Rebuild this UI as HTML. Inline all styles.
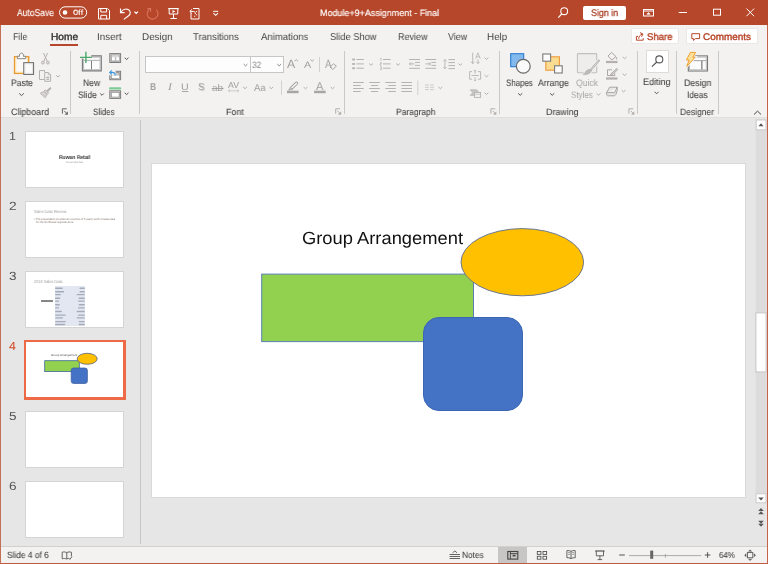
<!DOCTYPE html>
<html><head><meta charset="utf-8"><title>PowerPoint</title>
<style>
html,body{margin:0;padding:0;background:#e6e6e6;}
body{width:768px;height:564px;overflow:hidden;position:relative;font-family:"Liberation Sans",sans-serif;}
#w{position:absolute;left:0;top:0;width:768px;height:564px;overflow:hidden;background:#e6e6e6;}
.a{position:absolute;}
.t{position:absolute;white-space:nowrap;line-height:1;will-change:transform;transform-origin:0 0;text-rendering:geometricPrecision;}
svg{position:absolute;overflow:visible;}
</style></head><body><div id="w">
<div class="a" style="left:0;top:0;width:768px;height:25px;background:#b7472a"></div>
<div class="a" style="left:0;top:25px;width:768px;height:92px;background:#f3f2f1"></div>
<div class="a" style="left:0;top:117px;width:768px;height:1px;background:#e1dfdd"></div>
<div class="a" style="left:0;top:546px;width:768px;height:18px;background:#f3f2f1;border-top:1px solid #d2d0ce;box-sizing:border-box"></div>
<div class="a" style="left:140px;top:120px;width:1px;height:424px;background:#c8c6c4"></div>
<div class="a" style="left:152px;top:164px;width:593px;height:333px;background:#fff;box-shadow:0 0 0 1px #d9d9d9"></div>
<svg style="left:0;top:0" width="768" height="564">
<rect x="261.7" y="274.1" width="211.8" height="67.5" fill="#92d050" stroke="#5a80b2" stroke-width="1"/>
<ellipse cx="522.3" cy="262.2" rx="61.3" ry="33.6" fill="#ffc000" stroke="#6b7690" stroke-width="1"/>
<rect x="423.5" y="317.5" width="99" height="93" rx="15.5" ry="15.5" fill="#4472c4" stroke="#3b66b6" stroke-width="1"/>
</svg>
<svg style="left:0;top:0" width="768" height="564">
<rect x="755.7" y="119" width="11" height="375" fill="#dcdcdc"/>
<rect x="756.2" y="120" width="9.8" height="9.8" fill="#fff" stroke="#cbcbcb" stroke-width="1"/>
<rect x="756.1" y="493.8" width="9.8" height="9" fill="#fff" stroke="#cbcbcb" stroke-width="1"/>
<rect x="755.9" y="312.9" width="10.2" height="59" fill="#fff" stroke="#c6c6c6" stroke-width="1"/>
<path d="M758.4 126.3 L761 123.3 L763.6 126.3 Z" fill="#555"/>
<path d="M758.2 497.4 L763.8 497.4 L761 500.5 Z" fill="#555"/>
<path d="M758.2 511 L761 508 L763.8 511 Z M758.2 514.2 L761 511.2 L763.8 514.2 Z" fill="#555"/>
<path d="M758.2 520.8 L763.8 520.8 L761 523.7 Z M758.2 523.8 L763.8 523.8 L761 526.7 Z" fill="#555"/>
</svg>
<div class="a" style="left:25px;top:131px;width:99px;height:57px;background:#fff;border:1px solid #d4d4d4;box-sizing:border-box"></div>
<div class="a" style="left:25px;top:201px;width:99px;height:57px;background:#fff;border:1px solid #d4d4d4;box-sizing:border-box"></div>
<div class="a" style="left:25px;top:271px;width:99px;height:57px;background:#fff;border:1px solid #d4d4d4;box-sizing:border-box"></div>
<div class="a" style="left:24px;top:340px;width:102px;height:60px;background:#fff;border:2px solid #ee6a46;border-right-width:3px;border-bottom-width:3px;box-sizing:border-box"></div>
<div class="a" style="left:25px;top:411px;width:99px;height:57px;background:#fff;border:1px solid #d4d4d4;box-sizing:border-box"></div>
<div class="a" style="left:25px;top:481px;width:99px;height:57px;background:#fff;border:1px solid #d4d4d4;box-sizing:border-box"></div>
<div class="a" style="left:0;top:25px;width:768px;height:539px;border-left:1px solid #c46f58;border-right:1px solid #c4634a;border-bottom:1px solid #c05a3f;box-sizing:border-box;pointer-events:none;z-index:50"></div>
<div class="a" style="left:50px;top:44px;width:28px;height:2px;background:#b7472a"></div>
<div class="a" style="left:583px;top:6px;width:43px;height:14px;background:#fff;border-radius:2px"></div>
<div class="a" style="left:70.0px;top:51px;width:1px;height:63px;background:#cbc9c7"></div>
<div class="a" style="left:139.0px;top:51px;width:1px;height:63px;background:#cbc9c7"></div>
<div class="a" style="left:343.5px;top:51px;width:1px;height:63px;background:#cbc9c7"></div>
<div class="a" style="left:498.7px;top:51px;width:1px;height:63px;background:#cbc9c7"></div>
<div class="a" style="left:637.0px;top:51px;width:1px;height:63px;background:#cbc9c7"></div>
<div class="a" style="left:676.0px;top:51px;width:1px;height:63px;background:#cbc9c7"></div>
<div class="a" style="left:718.0px;top:51px;width:1px;height:63px;background:#cbc9c7"></div>
<svg style="left:0;top:0" width="768" height="26" fill="none" stroke="#fff" stroke-width="1" stroke-linecap="butt" stroke-linejoin="miter">
<rect x="59.5" y="6.8" width="27.2" height="11.3" rx="5.65" stroke-width="1"/>
<circle cx="65" cy="12.5" r="2.3" fill="#fff" stroke="none"/>
<!-- save -->
<path d="M98.5 8.5 H107.5 L109.5 10.5 V19 H98.5 Z"/>
<path d="M100.8 8.5 V12 H106.6 V8.5"/>
<path d="M100.8 19 V15.3 H106.6 V19"/>
<!-- undo -->
<path d="M120.5 8.6 V12.6 H124.6" stroke-width="1.1"/>
<path d="M120.8 12.3 C122.5 9.6 125.6 8.3 128.2 9.5 C130.8 10.9 130.9 13.8 128.6 15.8 L123.8 19.4" stroke-width="1.1"/>
<path d="M134.4 11.6 L136.2 13.5 L138 11.6" stroke-width="1.2"/>
<!-- redo (disabled) -->
<g stroke="#d8735c" stroke-width="1.1">
<path d="M149.6 9.2 A5.4 5.4 0 1 0 156.2 9.7"/>
<path d="M147.4 8.5 H150.6 V11.7" />
</g>
<!-- slideshow -->
<path d="M168.2 8.6 H178.8" stroke-width="1.2"/>
<path d="M169.2 9 V14 H177.8 V9"/>
<path d="M172.5 10.1 L175.3 11.6 L172.5 13.1 Z" fill="#fff" stroke="none"/>
<path d="M173.5 14 V18.5 M170.4 18.5 H176.9"/>
<!-- touch/mouse icon -->
<path d="M193 8.5 H199 V19 H191 V13"/>
<path d="M190 11.4 H193.3 C195 11.4 195.4 12.6 195.4 14" stroke-width="1"/>
<path d="M191.9 9.4 L189.8 11.4 L191.9 13.4" stroke-width="1"/>
<path d="M196.5 11 V12 M196.5 14.3 V15.3 M194.6 15.8 V16.8" stroke-width="1.1"/>
<!-- customize -->
<path d="M213.2 11.3 H218.2" stroke-width="1"/>
<path d="M213.4 13.2 L215.7 15.3 L218 13.2" stroke-width="1.1"/>
<!-- search -->
<circle cx="564.2" cy="11.2" r="3.4" stroke-width="1.1"/>
<path d="M561.8 13.8 L558.3 17.6" stroke-width="1.2"/>
<!-- ribbon display -->
<rect x="643.5" y="9.5" width="10" height="6.5" stroke-width="1"/>
<path d="M643.5 11 H653.5" stroke-width="1"/>
<path d="M646.8 14.3 L648.5 12.6 L650.2 14.3 Z" fill="#fff" stroke="#fff" stroke-width="0.6"/>
<!-- min max close -->
<path d="M678.7 12.5 H687" stroke-width="1"/>
<rect x="713.5" y="9.2" width="7" height="6" stroke-width="1"/>
<path d="M746.5 8.6 L754.1 16.2 M754.1 8.6 L746.5 16.2" stroke-width="1"/>
</svg>
<svg style="left:0;top:0" width="768" height="118" fill="none" stroke-linecap="butt">
<rect x="14.6" y="56.7" width="14" height="16.6" fill="#faf9f8" stroke="#ec9a30" stroke-width="1.5"/>
<rect x="15.8" y="57.9" width="11.6" height="14.2" fill="none" stroke="#fbe4b4" stroke-width="1"/>
<path d="M17.3 58.7 V56.3 H19.6 C19.2 54.6 20 53.1 21.5 53.1 C23 53.1 23.8 54.6 23.4 56.3 H25.7 V58.7 Z" fill="#fcfcfc" stroke="#8a8a8a" stroke-width="1"/>
<rect x="23.8" y="62.7" width="9.7" height="11.7" fill="#fafafa" stroke="#747474" stroke-width="1.2"/>
<rect x="25" y="63.9" width="7.3" height="9.3" fill="none" stroke="#e4e4e4" stroke-width="0.8"/>
<path d="M19.2 93.4 L21.5 95.6 L23.8 93.4" stroke="#555" stroke-width="1.0" fill="none"/>
<g stroke="#b3b0ad" stroke-width="1"><path d="M43.5 53 L47.2 61.4 M47.5 53 L43.8 61.4"/><circle cx="42.9" cy="62.6" r="1.4" fill="#e6e4e2"/><circle cx="47.9" cy="62.6" r="1.4" fill="#e6e4e2"/></g>
<g stroke="#b3b0ad" stroke-width="1"><path d="M44 79.5 H39.5 V70.5 H44.5 V72"/><path d="M44.7 72.5 H48.3 L50.6 74.8 V81.3 H44.7 Z"/><path d="M46.3 77.3 H49.2 M46.3 79.2 H49.2" stroke="#a3a19f"/><path d="M48.3 72.5 V74.8 H50.6" stroke-width="0.7"/></g>
<path d="M56.1 75.3 L58.0 77.1 L59.9 75.3" stroke="#b3b0ad" stroke-width="1.0" fill="none"/>
<g stroke="#b3b0ad" stroke-width="0.9"><path d="M50.3 88.2 L47.6 91" stroke-width="2" stroke-linecap="round"/><path d="M45.4 89.8 L48.6 93 L47 94.6 L43.8 91.4 Z" fill="#d4d2d0"/><path d="M43.5 91.8 L40.2 93.2 L45.2 97.8 L46.7 94.8 Z" fill="#e2e0de"/><path d="M42 93.6 L46 96.4" stroke-width="0.6"/></g>
<path d="M91.2 56 H101.2 V70.8 H82.5 V58.2 H91.2 Z" fill="#fcfcfc" stroke="none"/>
<path d="M91.3 57.1 H100.1 V69.7 H83.6 V58.6" fill="none" stroke="#b9b9b9" stroke-width="1"/>
<path d="M91.2 55.9 H101.3 V70.9 H82.4 V58.5" fill="none" stroke="#787878" stroke-width="1.1"/>
<path d="M84 60.4 H99.8" stroke="#b4b4b4" stroke-width="1.1"/><path d="M91.5 60.9 V69.4" stroke="#808080" stroke-width="1"/>
<path d="M80 57.4 H91.9 M85.9 51.7 V62.9" stroke="#4aa968" stroke-width="1.4"/>
<path d="M100.2 93.5 L102.0 95.3 L103.8 93.5" stroke="#555" stroke-width="1.0" fill="none"/>
<rect x="109.8" y="53.6" width="10.8" height="8.9" fill="#eceae8" stroke="#7c7c7c" stroke-width="1"/><rect x="111.1" y="54.9" width="8.2" height="6.3" fill="#c4c4c4" stroke="#8e8e8e" stroke-width="0.8"/>
<rect x="111.9" y="57.2" width="2.9" height="3.2" fill="#fff"/><rect x="116.3" y="57.2" width="2.9" height="3.2" fill="#fff"/><rect x="111.7" y="55.4" width="7.6" height="1.2" fill="#e4e4e4"/>
<path d="M124.7 57.7 L126.6 59.5 L128.5 57.7" stroke="#555" stroke-width="1.0" fill="none"/>
<rect x="109.8" y="71.3" width="10.8" height="8.4" fill="#eceae8" stroke="#7c7c7c" stroke-width="1"/><rect x="111.1" y="72.6" width="8.2" height="5.8" fill="#c4c4c4" stroke="#8e8e8e" stroke-width="0.8"/>
<rect x="112" y="75.6" width="7.2" height="2.6" fill="#fff"/>
<rect x="108" y="69" width="7.6" height="6.2" fill="#f3f2f1" stroke="none"/>
<path d="M110 72.4 H112.6 C114.6 72.4 115.2 73.8 115.2 75.6" stroke="#3a96dd" stroke-width="1.1"/><path d="M111.8 70.3 L109.7 72.4 L111.8 74.5" stroke="#3a96dd" stroke-width="1.1"/>
<path d="M110 88.4 H120.2" stroke="#7dcc96" stroke-width="2.2" stroke-linecap="round"/>
<rect x="109.8" y="90.8" width="10.8" height="7.6" fill="#eceae8" stroke="#7c7c7c" stroke-width="1"/><rect x="111.1" y="92.1" width="8.2" height="5.0" fill="#c4c4c4" stroke="#8e8e8e" stroke-width="0.8"/>
<rect x="112" y="93" width="6.6" height="3.6" fill="#fff"/>
<path d="M124.7 92.8 L126.6 94.6 L128.5 92.8" stroke="#555" stroke-width="1.0" fill="none"/>
<path d="M62.4 113.7 V108.8 H66.7" stroke="#666" stroke-width="1"/><path d="M64.3 110.9 L67.1 113.9" stroke="#666" stroke-width="1"/><path d="M67.9 111.3 V114.7 H64.5 Z" fill="#666" stroke="none"/>
<path d="M335.7 113.7 V108.8 H340.0" stroke="#b3b0ad" stroke-width="1"/><path d="M337.6 110.9 L340.4 113.9" stroke="#b3b0ad" stroke-width="1"/><path d="M341.2 111.3 V114.7 H337.8 Z" fill="#b3b0ad" stroke="none"/>
<path d="M490.9 113.7 V108.8 H495.2" stroke="#b3b0ad" stroke-width="1"/><path d="M492.8 110.9 L495.6 113.9" stroke="#b3b0ad" stroke-width="1"/><path d="M496.4 111.3 V114.7 H493.0 Z" fill="#b3b0ad" stroke="none"/>
<path d="M628.9 113.7 V108.8 H633.2" stroke="#b3b0ad" stroke-width="1"/><path d="M630.8 110.9 L633.6 113.9" stroke="#b3b0ad" stroke-width="1"/><path d="M634.4 111.3 V114.7 H631.0 Z" fill="#b3b0ad" stroke="none"/>
</svg>
<div class="a" style="left:145px;top:56px;width:106px;height:17px;background:#fdfdfd;border:1px solid #c8c6c4;box-sizing:border-box"></div>
<div class="a" style="left:250px;top:56px;width:34px;height:17px;background:#fdfdfd;border:1px solid #c8c6c4;box-sizing:border-box"></div>
<svg style="left:0;top:0" width="768" height="118" fill="none" stroke-linecap="butt">
<path d="M243.6 64.1 L245.5 65.9 L247.4 64.1" stroke="#8a8886" stroke-width="1.0" fill="none"/>
<path d="M277.3 64.1 L279.2 65.9 L281.1 64.1" stroke="#8a8886" stroke-width="1.0" fill="none"/>
<path d="M181.8 91.5 H188.3" stroke="#a09e9c" stroke-width="0.9"/>
<path d="M211.8 88.5 H223.6" stroke="#a09e9c" stroke-width="0.9"/>
<path d="M228.4 90.8 H239 M230 89.4 L228.5 90.8 L230 92.2 M237.4 89.4 L238.9 90.8 L237.4 92.2" stroke="#c2c0be" stroke-width="0.8"/>
<path d="M243.1 86.9 L245.0 88.7 L246.9 86.9" stroke="#b3b0ad" stroke-width="1.0" fill="none"/>
<path d="M269.4 86.9 L271.3 88.7 L273.2 86.9" stroke="#b3b0ad" stroke-width="1.0" fill="none"/>
<path d="M294.6 61.2 L296.3 59.6 L298 61.2" stroke="#a09e9c" stroke-width="0.9"/>
<path d="M310.5 59.6 L312.2 61.2 L313.9 59.6" stroke="#a09e9c" stroke-width="0.9"/>
<path d="M319.5 57 V72" stroke="#d2d0ce" stroke-width="1"/>
<path d="M281.5 80.5 V95" stroke="#d2d0ce" stroke-width="1"/>
<path d="M333.6 63.8 L336.4 66.2 L332.8 69.4 L330 67 Z" fill="#f3f2f1" stroke="#a09e9c" stroke-width="0.9"/>
<path d="M296.5 83.3 L291.6 88" stroke="#a09e9c" stroke-width="3.4" stroke-linecap="round"/><path d="M296.5 83.3 L291.6 88" stroke="#f3f2f1" stroke-width="1.7" stroke-linecap="round"/>
<path d="M290.4 87.2 L292.4 89.2 L288.4 90.2 Z" fill="#c8c6c4" stroke="#a09e9c" stroke-width="0.6"/>
<rect x="287" y="90.7" width="11.6" height="2.5" fill="#a8a6a4"/>
<path d="M303.6 87.0 L305.5 88.8 L307.4 87.0" stroke="#b3b0ad" stroke-width="1.0" fill="none"/>
<rect x="314.1" y="90.7" width="11.6" height="2.5" fill="#a8a6a4"/>
<path d="M330.7 87.0 L332.6 88.8 L334.5 87.0" stroke="#b3b0ad" stroke-width="1.0" fill="none"/>
</svg>
<svg style="left:0;top:0" width="768" height="118" fill="none" stroke-linecap="butt">
<path d="M356.4 59.5 H363.8 M352.4 59.5 H354.8 M356.4 63.9 H363.8 M352.4 63.9 H354.8 M356.4 68.2 H363.8 M352.4 68.2 H354.8 M383.0 59.5 H390.6 M383.0 63.9 H390.6 M383.0 68.2 H390.6 M409.1 59.5 H420.0 M415.0 62.4 H420.0 M415.0 65.4 H420.0 M409.1 68.3 H420.0 M409.3 63.9 H414.3 M425.4 59.5 H436.2 M431.4 62.4 H436.2 M431.4 65.4 H436.2 M425.4 68.3 H436.2 M425.6 63.9 H430.6 M448.4 59.6 H455.0 M448.4 62.6 H455.0 M448.4 65.6 H455.0 M448.4 68.6 H455.0 M353.1 82.5 H363.8 M369.1 82.5 H379.8 M385.3 82.5 H395.8 M401.3 82.5 H412.0 M353.1 85.5 H360.7 M371.0 85.5 H378.1 M388.3 85.5 H395.8 M401.3 85.5 H412.0 M353.1 88.5 H363.8 M369.1 88.5 H379.8 M385.3 88.5 H395.8 M401.3 88.5 H412.0 M353.1 91.5 H360.7 M371.0 91.5 H378.1 M388.3 91.5 H395.8 M401.3 91.5 H412.0 " stroke="#b5b3b1" stroke-width="1"/>
<path d="M352.4 59.5 H354.8 M352.4 63.9 H354.8 M352.4 68.2 H354.8" stroke="#b5b3b1" stroke-width="2"/>
<path d="M380.3 58.4 L381 57.8 V61 M380 62.6 H381.4 V63.8 H380 V65.2 H381.5 M380 66.8 H381.4 V69.6 H380 M380.4 68.2 H381.4" stroke="#b5b3b1" stroke-width="0.7"/>
<path d="M411 62.2 L409.3 63.9 L411 65.6 M429 62.2 L430.7 63.9 L429 65.6" stroke="#b5b3b1" stroke-width="0.9"/>
<path d="M444.9 59.6 V68.8 M443.3 61.2 L444.9 59.6 L446.5 61.2 M443.3 67.2 L444.9 68.8 L446.5 67.2" stroke="#b5b3b1" stroke-width="0.9"/>
<path d="M369.2 63.5 L371.1 65.3 L373.0 63.5" stroke="#b3b0ad" stroke-width="1.0" fill="none"/>
<path d="M396.1 63.5 L398.0 65.3 L399.9 63.5" stroke="#b3b0ad" stroke-width="1.0" fill="none"/>
<path d="M458.4 63.5 L460.3 65.3 L462.2 63.5" stroke="#b3b0ad" stroke-width="1.0" fill="none"/>
<path d="M484.6 57.6 L486.5 59.4 L488.4 57.6" stroke="#b3b0ad" stroke-width="1.0" fill="none"/>
<path d="M484.6 75.1 L486.5 76.9 L488.4 75.1" stroke="#b3b0ad" stroke-width="1.0" fill="none"/>
<path d="M484.6 92.7 L486.5 94.5 L488.4 92.7" stroke="#b3b0ad" stroke-width="1.0" fill="none"/>
<path d="M438.5 86.9 L440.4 88.7 L442.3 86.9" stroke="#b3b0ad" stroke-width="1.0" fill="none"/>
<path d="M417.8 80.5 V95" stroke="#d2d0ce" stroke-width="1"/>
<path d="M425 85 H428.8 M430 85 H433.8 M425 87.3 H428.8 M430 87.3 H433.8 M425 89.6 H428.8 M430 89.6 H433.8" stroke="#c8c6c4" stroke-width="0.9"/>
<path d="M472.7 52.6 V63.6 M470.8 61.6 L472.7 63.6 L474.6 61.6 M478 59.4 V63.6 M476.4 62 L478 63.6 L479.6 62" stroke="#b5b3b1" stroke-width="0.9"/>
<path d="M475.6 58.6 L477.9 52.8 L480.2 58.6 M476.4 56.8 H479.4" stroke="#b5b3b1" stroke-width="0.8"/>
<path d="M472 71.6 H469.6 V79.2 H472 M478 71.6 H480.6 V79.2 H478 M471.5 75.5 H478.8" stroke="#b5b3b1" stroke-width="0.9"/>
<path d="M475.1 70 V73.8 M475.1 77.2 V81 M473.9 71.2 L475.1 70 L476.3 71.2 M473.9 79.8 L475.1 81 L476.3 79.8" stroke="#b5b3b1" stroke-width="0.8"/>
<path d="M470.2 89.8 H476.6 L479 92.6 L476.6 95.4 H470.2 L472.6 92.6 Z" fill="#c8c6c4" stroke="#b5b3b1" stroke-width="0.7"/>
<rect x="474.6" y="92.4" width="6" height="5" fill="#f3f2f1" stroke="#b5b3b1" stroke-width="0.9"/><path d="M474.6 94.2 H480.6" stroke="#b5b3b1" stroke-width="0.7"/>
</svg>
<div class="a" style="left:631px;top:28px;width:48px;height:16px;background:#fff;border:1px solid #eae8e6;border-radius:2px;box-sizing:border-box"></div>
<div class="a" style="left:686px;top:28px;width:72px;height:16px;background:#fff;border:1px solid #eae8e6;border-radius:2px;box-sizing:border-box"></div>
<div class="a" style="left:645.5px;top:50px;width:23px;height:22.5px;background:#fff;border:1px solid #dddbd9;box-sizing:border-box"></div>
<svg style="left:0;top:0" width="768" height="118" fill="none" stroke-linecap="butt">
<path d="M638 36.4 H636.4 V40.2 H643.2 V38.2" stroke="#b7472a" stroke-width="1"/><path d="M638.7 38.8 C638.8 36.4 640 34.8 642.2 34.2" stroke="#b7472a" stroke-width="1"/><path d="M640 32.6 L642.9 34 L641.5 36.8" stroke="#b7472a" stroke-width="1"/>
<path d="M691.8 33.7 H699.6 V38.6 H695.4 L693.4 40.4 V38.6 H691.8 Z" stroke="#b7472a" stroke-width="1"/>
<rect x="510.7" y="53.7" width="13" height="13" fill="#83b9ec" stroke="#2b7cd3" stroke-width="1.1"/>
<circle cx="523.3" cy="66.2" r="6.9" fill="#fafafa" stroke="#666" stroke-width="1.2"/>
<path d="M518.1 93.3 L520.2 95.3 L522.3 93.3" stroke="#555" stroke-width="1.0" fill="none"/>
<rect x="545.8" y="56.8" width="13.6" height="13.4" fill="#f9dc90" stroke="#ee9a3a" stroke-width="1.1"/>
<rect x="542.8" y="54" width="7.8" height="7.2" fill="#fcfcfc" stroke="#7a7a7a" stroke-width="1.1"/>
<rect x="554.6" y="65.8" width="7.6" height="7.2" fill="#fcfcfc" stroke="#7a7a7a" stroke-width="1.1"/>
<path d="M550.1 93.3 L552.2 95.3 L554.3 93.3" stroke="#555" stroke-width="1.0" fill="none"/>
<rect x="577.4" y="53.6" width="19.3" height="19.2" rx="0.8" fill="#eeedec" stroke="#c2c0be" stroke-width="1.1"/>
<path d="M598.8 60.6 L590.2 70.6" stroke="#f3f2f1" stroke-width="4"/><path d="M590.6 69.4 C588 69 586.2 70.4 585.4 72 C584.8 73.2 584 73.9 582.6 74.3 C586 75.2 589.8 74.4 591.4 71 Z" fill="#f3f2f1" stroke="#f3f2f1" stroke-width="2"/>
<path d="M598.8 60.6 L590.4 70.4" stroke="#b0aeac" stroke-width="2.2" stroke-linecap="round"/><path d="M598.6 60.9 L591 69.7" stroke="#ecebea" stroke-width="0.7"/>
<path d="M590.6 69.4 C588 69 586.2 70.4 585.4 72 C584.8 73.2 584 73.9 582.6 74.3 C586 75.2 589.8 74.4 591.4 71 Z" fill="#bdbbb9" stroke="#aeacaa" stroke-width="0.5"/>
<path d="M596.7 93.4 L598.6 95.2 L600.5 93.4" stroke="#b3b0ad" stroke-width="1.0" fill="none"/>
<path d="M611.6 52.4 L616 56.6 L611.8 60 L608 56 Z M616.2 57 C617 58.2 617 59.2 616.3 59.6" stroke="#a09e9c" stroke-width="0.9"/>
<rect x="606" y="60.9" width="11.5" height="2.2" fill="#b3b0ad"/>
<path d="M622.7 56.9 L624.6 58.7 L626.5 56.9" stroke="#b3b0ad" stroke-width="1.0" fill="none"/>
<path d="M612 69.8 H607.5 V75.6 H614.8 V73.4" stroke="#a09e9c" stroke-width="0.9"/><path d="M616.8 68.4 L617.8 69.4 L612.2 75 L610.6 75.4 L611 73.8 Z" stroke="#a09e9c" stroke-width="0.8" fill="#d6d4d2"/>
<rect x="606" y="77.4" width="11.5" height="2.2" fill="#b3b0ad"/>
<path d="M622.7 73.7 L624.6 75.5 L626.5 73.7" stroke="#b3b0ad" stroke-width="1.0" fill="none"/>
<path d="M609.6 87.2 H617.2 L614.6 92.6 H606.6 Z M606.6 92.6 V95 C607 95.6 607.6 95.8 608.2 95.8 H614 C615 95.8 615.6 95 616 94.2 L617.2 90.6 V87.2" stroke="#a09e9c" stroke-width="0.9" fill="#e8e6e4"/>
<path d="M621.7 90.1 L623.6 91.9 L625.5 90.1" stroke="#b3b0ad" stroke-width="1.0" fill="none"/>
<circle cx="659.3" cy="59.4" r="3.5" stroke="#555" stroke-width="1.1"/><path d="M656.8 62 L651.9 66.6" stroke="#555" stroke-width="1.2"/>
<path d="M654.6 91.8 L656.6 93.8 L658.6 91.8" stroke="#555" stroke-width="1.0" fill="none"/>
<rect x="688.3" y="55.9" width="19.2" height="15.1" fill="#fcfcfc" stroke="#787878" stroke-width="1.1"/>
<rect x="689.5" y="57.1" width="16.8" height="12.7" fill="none" stroke="#b9b9b9" stroke-width="1"/>
<path d="M690 60.6 H706.2" stroke="#aaa" stroke-width="1.1"/><path d="M701.8 61 V69.6" stroke="#969696" stroke-width="1.6"/>
<path d="M690.4 52.4 H695.6 L692.8 57.2 H695.2 L686.8 66.4 L689.2 60 H686.4 Z" fill="#f3f2f1" stroke="#f3f2f1" stroke-width="2.4"/>
<path d="M690.4 52.4 H695.6 L692.8 57.2 H695.2 L686.8 66.4 L689.2 60 H686.4 Z" fill="#fbe19b" stroke="#f0a030" stroke-width="1"/>
<path d="M754 114.5 L757.5 111.1 L761 114.5" stroke="#444" stroke-width="1"/>
</svg>
<div class="a" style="left:498px;top:547px;width:29px;height:16px;background:#c8c6c4"></div>
<svg style="left:0;top:540px" width="768" height="24" viewBox="0 540 768 24" fill="none" stroke-linecap="butt">
<path d="M66.8 552.6 V559 M66.8 552.6 C65.4 551.8 63.6 551.8 62.2 552.2 V558.8 C63.6 558.4 65.4 558.4 66.8 559 C67.4 558.6 68 558.5 68.6 558.4 M66.8 552.6 C68.2 551.8 70 551.8 71.4 552.2 V556.4" stroke="#555" stroke-width="0.9"/>
<path d="M68.6 558 L69.8 559.4 L72 556.6" stroke="#555" stroke-width="0.9"/>
<path d="M449.6 554.5 H460 M449.6 556.5 H460 M449.6 558.5 H460" stroke="#555" stroke-width="0.9"/><path d="M452.6 552.8 L454.8 550.9 L457 552.8" stroke="#555" stroke-width="0.9"/>
<rect x="507.8" y="551.5" width="10" height="7.6" stroke="#444" stroke-width="1.1"/><path d="M510.4 551.5 V559 M510.4 553.6 H517.6" stroke="#444" stroke-width="0.9"/><rect x="512.6" y="554.8" width="3" height="1.6" fill="#444"/>
<rect x="537.3" y="551.5" width="3.6" height="2.9" stroke="#555" stroke-width="0.9"/>
<rect x="543.0" y="551.5" width="3.6" height="2.9" stroke="#555" stroke-width="0.9"/>
<rect x="537.3" y="556.3" width="3.6" height="2.9" stroke="#555" stroke-width="0.9"/>
<rect x="543.0" y="556.3" width="3.6" height="2.9" stroke="#555" stroke-width="0.9"/>
<path d="M571 551.4 V558.6 M571 551.4 C569.6 550.6 568.2 550.4 566.9 550.6 V557.8 C568.2 557.6 569.6 557.8 571 558.6 C572.4 557.8 573.8 557.6 575.2 557.8 V550.6 C573.8 550.4 572.4 550.6 571 551.4" stroke="#555" stroke-width="0.9"/><path d="M568.3 552.6 H569.8 M568.3 554.4 H569.8 M572.3 552.6 H573.8 M572.3 554.4 H573.8" stroke="#555" stroke-width="0.7"/>
<path d="M595.2 551 H604.6" stroke="#555" stroke-width="1.2"/><path d="M596.3 551 V555.8 H603.5 V551 M599.9 555.8 V559.6 M597.6 559.6 H602.2" stroke="#555" stroke-width="0.9"/>
<path d="M619.2 555 H624.8" stroke="#555" stroke-width="1"/>
<path d="M629 555.6 H701.2" stroke="#9a9896" stroke-width="0.8"/><path d="M665.4 554 V557.6" stroke="#9a9896" stroke-width="0.8"/>
<rect x="650.2" y="550.6" width="3" height="8.2" fill="#666"/>
<path d="M704.8 555 H710.4 M707.6 552.2 V557.8" stroke="#555" stroke-width="1"/>
<rect x="747.4" y="552.6" width="5.4" height="5.2" stroke="#555" stroke-width="0.9"/>
<path d="M748.6 551.2 L750.1 549.9 L751.6 551.2 Z M748.6 559.2 L750.1 560.5 L751.6 559.2 Z M746 553.7 L744.7 555.2 L746 556.7 Z M754.2 553.7 L755.5 555.2 L754.2 556.7 Z" fill="#555" stroke="#555" stroke-width="0.5"/>
</svg>
<div class="a" style="left:54.8px;top:286px;width:30.4px;height:40px;background:#e3e7f2"></div>
<svg style="left:0;top:0" width="140" height="564"><g fill="#5d6478" opacity="0.45"><rect x="55.1" y="287.51" width="7.6" height="1.4" rx="0.5"/><rect x="79.5" y="287.51" width="5.3" height="1.4" rx="0.5"/><rect x="55.1" y="291.09" width="9.0" height="1.4" rx="0.5"/><rect x="79.5" y="291.09" width="5.3" height="1.4" rx="0.5"/><rect x="55.1" y="293.95" width="5.7" height="1.4" rx="0.5"/><rect x="76.6" y="293.95" width="8.2" height="1.4" rx="0.5"/><rect x="55.1" y="297.53" width="5.0" height="1.4" rx="0.5"/><rect x="78.7" y="297.53" width="6.1" height="1.4" rx="0.5"/><rect x="55.1" y="300.40" width="3.9" height="1.4" rx="0.5"/><rect x="78.0" y="300.40" width="6.8" height="1.4" rx="0.5"/><rect x="55.1" y="303.98" width="4.7" height="1.4" rx="0.5"/><rect x="78.7" y="303.98" width="6.1" height="1.4" rx="0.5"/><rect x="55.1" y="307.13" width="3.9" height="1.4" rx="0.5"/><rect x="78.0" y="307.13" width="6.8" height="1.4" rx="0.5"/><rect x="55.1" y="310.86" width="6.7" height="1.4" rx="0.5"/><rect x="76.6" y="310.86" width="8.2" height="1.4" rx="0.5"/><rect x="55.1" y="314.44" width="10.7" height="1.4" rx="0.5"/><rect x="78.0" y="314.44" width="6.8" height="1.4" rx="0.5"/><rect x="55.1" y="317.16" width="7.9" height="1.4" rx="0.5"/><rect x="76.6" y="317.16" width="8.2" height="1.4" rx="0.5"/><rect x="55.1" y="320.89" width="10.7" height="1.4" rx="0.5"/><rect x="78.7" y="320.89" width="6.1" height="1.4" rx="0.5"/><rect x="55.1" y="323.75" width="10.0" height="1.4" rx="0.5"/><rect x="78.7" y="323.75" width="6.1" height="1.4" rx="0.5"/></g></svg>
<div class="a" style="left:40.8px;top:300.4px;width:12.4px;height:1.4px;background:#222;opacity:0.55;border-radius:0.5px"></div>
<svg style="left:0;top:0" width="140" height="564">
<rect x="44.7" y="360.7" width="34.6" height="10.9" fill="#92d050" stroke="#41699c" stroke-width="0.8"/>
<ellipse cx="87.2" cy="358.8" rx="10" ry="5.5" fill="#ffc000" stroke="#54627e" stroke-width="0.8"/>
<rect x="71.2" y="368" width="16.2" height="15.5" rx="2.4" fill="#4472c4" stroke="#365a9e" stroke-width="0.7"/>
</svg>
<span class="t" style="left:302.21px;top:228px;font-size:17.50px;line-height:20px;color:#111;transform:scaleX(1.0475);">Group Arrangement</span>
<span class="t" style="left:8.74px;top:129px;font-size:11.80px;line-height:14px;color:#555;transform:scaleX(1.0600);">1</span>
<span class="t" style="left:8.62px;top:199px;font-size:11.80px;line-height:14px;color:#555;transform:scaleX(1.1636);">2</span>
<span class="t" style="left:8.73px;top:269px;font-size:11.80px;line-height:14px;color:#555;transform:scaleX(1.1455);">3</span>
<span class="t" style="left:9.04px;top:339px;font-size:11.80px;line-height:14px;color:#d24726;transform:scaleX(1.0500);">4</span>
<span class="t" style="left:8.73px;top:409px;font-size:11.80px;line-height:14px;color:#555;transform:scaleX(1.1455);">5</span>
<span class="t" style="left:8.73px;top:479px;font-size:11.80px;line-height:14px;color:#555;transform:scaleX(1.1455);">6</span>
<span class="t" style="left:12.63px;top:32px;font-size:9.90px;line-height:11px;color:#444;transform:scaleX(0.8949);">File</span>
<span class="t" style="left:50.59px;top:32px;font-size:9.90px;line-height:11px;color:#333;transform:scaleX(1.0275);-webkit-text-stroke:0.4px #333;">Home</span>
<span class="t" style="left:96.71px;top:32px;font-size:9.90px;line-height:11px;color:#444;transform:scaleX(0.9895);">Insert</span>
<span class="t" style="left:141.95px;top:32px;font-size:9.90px;line-height:11px;color:#444;transform:scaleX(0.9949);">Design</span>
<span class="t" style="left:193.06px;top:32px;font-size:9.90px;line-height:11px;color:#444;transform:scaleX(0.9545);">Transitions</span>
<span class="t" style="left:261.00px;top:32px;font-size:9.90px;line-height:11px;color:#444;transform:scaleX(0.9691);">Animations</span>
<span class="t" style="left:330.23px;top:32px;font-size:9.90px;line-height:11px;color:#444;transform:scaleX(0.9408);">Slide Show</span>
<span class="t" style="left:397.61px;top:32px;font-size:9.90px;line-height:11px;color:#444;transform:scaleX(0.9134);">Review</span>
<span class="t" style="left:447.70px;top:32px;font-size:9.90px;line-height:11px;color:#444;transform:scaleX(0.9082);">View</span>
<span class="t" style="left:486.96px;top:32px;font-size:9.90px;line-height:11px;color:#444;transform:scaleX(0.9922);">Help</span>
<span class="t" style="left:17.28px;top:8px;font-size:9.80px;line-height:11px;color:#fff;transform:scaleX(0.8695);-webkit-text-stroke:0.1px #fff;">AutoSave</span>
<span class="t" style="left:319.67px;top:8px;font-size:9.20px;line-height:10px;color:#fff;transform:scaleX(0.9759);-webkit-text-stroke:0.15px #fff;">Module+9+Assignment - Final</span>
<span class="t" style="left:590.84px;top:8px;font-size:9.60px;line-height:11px;color:#a83c20;transform:scaleX(0.9274);-webkit-text-stroke:0.25px #a83c20;">Sign in</span>
<span class="t" style="left:6.54px;top:550px;font-size:9.00px;line-height:10px;color:#444;transform:scaleX(0.9273);-webkit-text-stroke:0.08px #444;">Slide 4 of 6</span>
<span class="t" style="left:462.31px;top:550px;font-size:9.00px;line-height:10px;color:#444;transform:scaleX(0.9244);-webkit-text-stroke:0.08px #444;">Notes</span>
<span class="t" style="left:719.14px;top:550px;font-size:8.60px;line-height:10px;color:#444;transform:scaleX(0.9212);-webkit-text-stroke:0.08px #444;">64%</span>
<span class="t" style="left:10.72px;top:107px;font-size:9.20px;line-height:10px;color:#444;transform:scaleX(0.9673);-webkit-text-stroke:0.08px #444;">Clipboard</span>
<span class="t" style="left:93.37px;top:107px;font-size:9.20px;line-height:10px;color:#444;transform:scaleX(0.8577);-webkit-text-stroke:0.08px #444;">Slides</span>
<span class="t" style="left:226.47px;top:107px;font-size:9.20px;line-height:10px;color:#444;transform:scaleX(0.9714);-webkit-text-stroke:0.08px #444;">Font</span>
<span class="t" style="left:396.11px;top:107px;font-size:9.20px;line-height:10px;color:#444;transform:scaleX(0.9205);-webkit-text-stroke:0.08px #444;">Paragraph</span>
<span class="t" style="left:546.07px;top:107px;font-size:9.20px;line-height:10px;color:#444;transform:scaleX(0.9674);-webkit-text-stroke:0.08px #444;">Drawing</span>
<span class="t" style="left:680.01px;top:107px;font-size:9.20px;line-height:10px;color:#444;transform:scaleX(0.9259);-webkit-text-stroke:0.08px #444;">Designer</span>
<span class="t" style="left:11.01px;top:77px;font-size:9.40px;line-height:11px;color:#444;transform:scaleX(0.9143);-webkit-text-stroke:0.08px #444;">Paste</span>
<span class="t" style="left:83.22px;top:77px;font-size:9.40px;line-height:11px;color:#444;transform:scaleX(0.9111);-webkit-text-stroke:0.08px #444;">New</span>
<span class="t" style="left:78.45px;top:89px;font-size:9.40px;line-height:11px;color:#444;transform:scaleX(0.9000);-webkit-text-stroke:0.08px #444;">Slide</span>
<span class="t" style="left:506.48px;top:77px;font-size:9.40px;line-height:11px;color:#444;transform:scaleX(0.8419);-webkit-text-stroke:0.08px #444;">Shapes</span>
<span class="t" style="left:537.70px;top:77px;font-size:9.40px;line-height:11px;color:#444;transform:scaleX(0.9212);-webkit-text-stroke:0.08px #444;">Arrange</span>
<span class="t" style="left:575.54px;top:77px;font-size:9.40px;line-height:11px;color:#a8a6a4;transform:scaleX(0.9191);">Quick</span>
<span class="t" style="left:571.37px;top:89px;font-size:9.40px;line-height:11px;color:#a8a6a4;transform:scaleX(0.8566);">Styles</span>
<span class="t" style="left:642.88px;top:76px;font-size:9.40px;line-height:11px;color:#444;transform:scaleX(0.9578);-webkit-text-stroke:0.08px #444;">Editing</span>
<span class="t" style="left:684.30px;top:77px;font-size:9.40px;line-height:11px;color:#444;transform:scaleX(0.9369);-webkit-text-stroke:0.08px #444;">Design</span>
<span class="t" style="left:686.72px;top:89px;font-size:9.40px;line-height:11px;color:#444;transform:scaleX(0.9011);-webkit-text-stroke:0.08px #444;">Ideas</span>
<span class="t" style="left:72.88px;top:8px;font-size:7.80px;line-height:9px;color:#fff;font-weight:700;transform:scaleX(0.8818);">Off</span>
<span class="t" style="left:251.94px;top:60px;font-size:9.20px;line-height:10px;color:#8a8a8a;transform:scaleX(0.9189);">32</span>
<span class="t" style="left:150.26px;top:82px;font-size:10.00px;line-height:11px;color:#a09e9c;font-weight:700;transform:scaleX(0.8500);">B</span>
<span class="t" style="left:167.60px;top:82px;font-size:10.40px;line-height:11px;color:#a09e9c;transform:scaleX(1.1200);font-family:'Liberation Serif',serif;font-style:italic;">I</span>
<span class="t" style="left:181.07px;top:82px;font-size:9.60px;line-height:11px;color:#a09e9c;transform:scaleX(1.1091);">U</span>
<span class="t" style="left:197.53px;top:82px;font-size:10.20px;line-height:11px;color:#a09e9c;transform:scaleX(0.9391);text-shadow:0.7px 0.7px 0.5px #c8c6c4;">S</span>
<span class="t" style="left:212.27px;top:82px;font-size:9.40px;line-height:11px;color:#a09e9c;transform:scaleX(1.0526);">ab</span>
<span class="t" style="left:228.00px;top:80px;font-size:8.60px;line-height:10px;color:#a09e9c;transform:scaleX(1.0233);">AV</span>
<span class="t" style="left:254.30px;top:83px;font-size:9.80px;line-height:11px;color:#a09e9c;transform:scaleX(0.9750);">Aa</span>
<span class="t" style="left:287.10px;top:57px;font-size:12.00px;line-height:14px;color:#a09e9c;transform:scaleX(1.0250);">A</span>
<span class="t" style="left:304.00px;top:60px;font-size:9.60px;line-height:11px;color:#a09e9c;transform:scaleX(1.1200);">A</span>
<span class="t" style="left:325.30px;top:57px;font-size:12.00px;line-height:14px;color:#a09e9c;transform:scaleX(0.8125);">A</span>
<span class="t" style="left:316.40px;top:81px;font-size:11.40px;line-height:12px;color:#a09e9c;transform:scaleX(0.9600);">A</span>
<span class="t" style="left:647.45px;top:32px;font-size:9.70px;line-height:11px;color:#b7472a;transform:scaleX(0.9822);-webkit-text-stroke:0.4px #b7472a;">Share</span>
<span class="t" style="left:703.14px;top:32px;font-size:9.70px;line-height:11px;color:#b7472a;transform:scaleX(1.0215);-webkit-text-stroke:0.4px #b7472a;">Comments</span>
<span class="t" style="left:59.18px;top:155px;font-size:5.60px;line-height:6px;color:#333;font-weight:700;transform:scaleX(0.8928);">Rowan Retail</span>
<span class="t" style="left:66.10px;top:161px;font-size:2.40px;line-height:3px;color:#999;transform:scaleX(0.8557);">Annual Sales Data</span>
<span class="t" style="left:33.78px;top:209px;font-size:4.40px;line-height:5px;color:#9a9a9a;transform:scaleX(0.8735);">Sales Data Review</span>
<span class="t" style="left:34.30px;top:217px;font-size:2.90px;line-height:4px;color:#86786e;transform:scaleX(0.8901);">&bull; This presentation provides an overview of 5 years&rsquo; worth of sales data</span>
<span class="t" style="left:35.77px;top:220px;font-size:2.90px;line-height:4px;color:#86786e;transform:scaleX(0.9250);">for the Northwest regional store</span>
<span class="t" style="left:33.78px;top:279px;font-size:4.40px;line-height:5px;color:#9a9a9a;transform:scaleX(0.8775);">2014 Sales Data</span>
<span class="t" style="left:50.94px;top:353px;font-size:2.90px;line-height:4px;color:#555;transform:scaleX(1.0320);">Group Arrangement</span>
</div></body></html>
